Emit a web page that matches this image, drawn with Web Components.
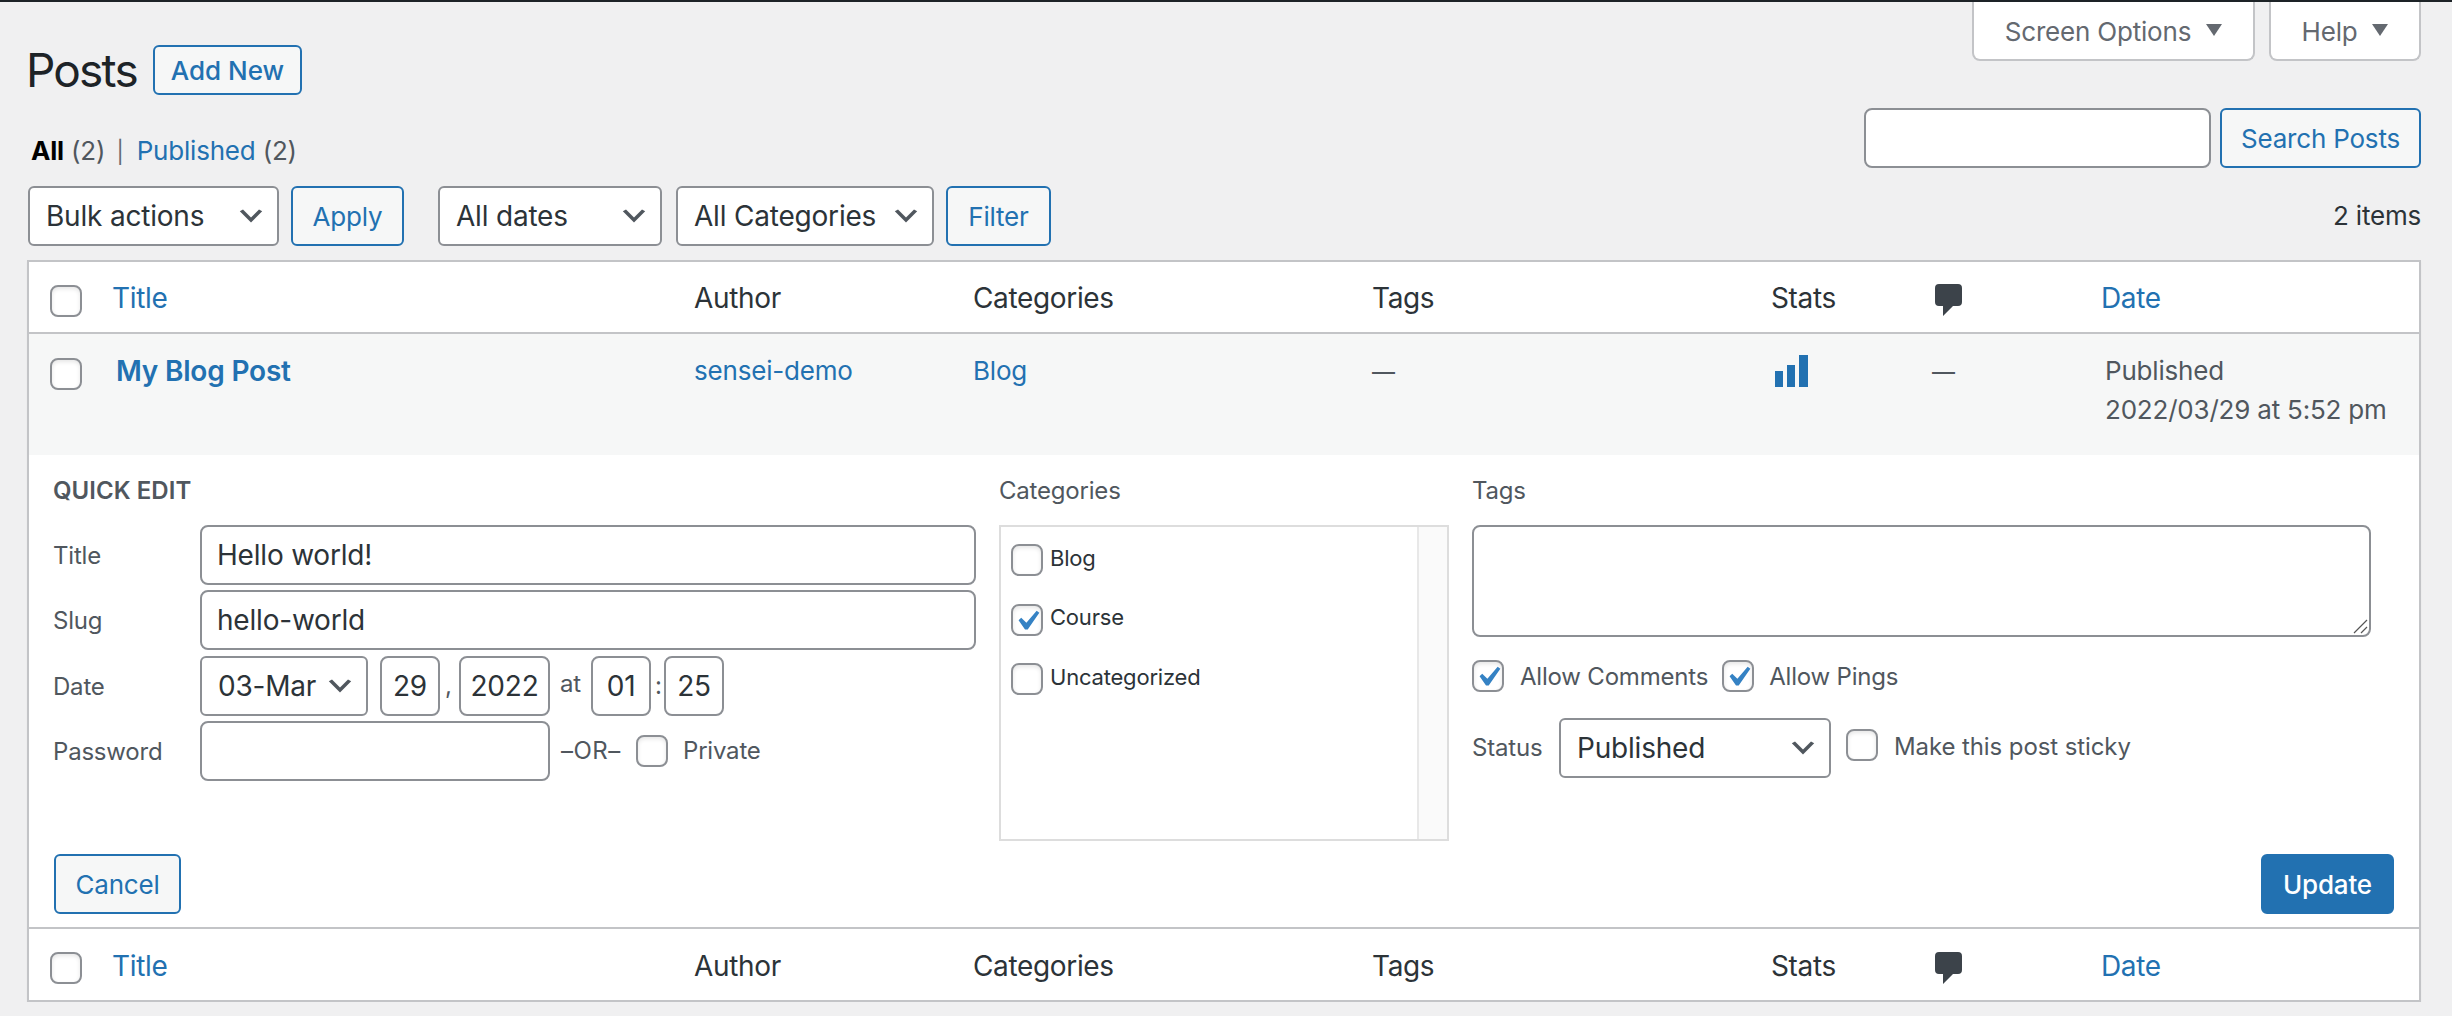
<!DOCTYPE html>
<html>
<head>
<meta charset="utf-8">
<title>Posts</title>
<style>
  html, body { margin: 0; background: #f0f0f1; }
  body { font: 26px/36px Inter, "Liberation Sans", sans-serif; color: #2c3338; letter-spacing: -0.2px; }
</style>
</head>
<body>
<wp-page>
  <wp-top-section>
    <wp-heading slot="left">
      Posts
      <wp-button slot="action" small style="width:149px">Add New</wp-button>
    </wp-heading>
    <wp-views slot="left">
      <b>All</b> <wp-muted>(2)</wp-muted> <wp-muted class="sep">|</wp-muted> <wp-link>Published</wp-link> <wp-muted>(2)</wp-muted>
    </wp-views>
    <wp-tabs slot="right">
      <wp-tab style="width:283px">Screen Options</wp-tab>
      <wp-tab style="width:152px">Help</wp-tab>
    </wp-tabs>
    <wp-search slot="right">
      <wp-field style="width:347px"></wp-field>
      <wp-button style="width:201px">Search Posts</wp-button>
    </wp-search>
  </wp-top-section>

  <wp-tablenav>
    <wp-select style="width:251px">Bulk actions</wp-select>
    <wp-button style="width:113px;margin-left:12px">Apply</wp-button>
    <wp-select style="width:224px;margin-left:34px">All dates</wp-select>
    <wp-select style="width:258px;margin-left:14px">All Categories</wp-select>
    <wp-button style="width:105px;margin-left:12px">Filter</wp-button>
    <wp-count>2 items</wp-count>
  </wp-tablenav>

  <wp-posts-table>
    <wp-head-row></wp-head-row>
    <wp-post-row>
      <wp-link slot="title" bold>My Blog Post</wp-link>
      <wp-link slot="author">sensei-demo</wp-link>
      <wp-link slot="categories">Blog</wp-link>
      <wp-dash slot="tags">—</wp-dash>
      <wp-stats slot="stats"></wp-stats>
      <wp-dash slot="comments">—</wp-dash>
      <span slot="date">Published<br>2022/03/29 at 5:52 pm</span>
    </wp-post-row>
    <wp-quick-edit>
      <wp-legend slot="left" strong>QUICK EDIT</wp-legend>
      <wp-form-row slot="left" label="Title"><wp-field big>Hello world!</wp-field></wp-form-row>
      <wp-form-row slot="left" label="Slug"><wp-field big>hello-world</wp-field></wp-form-row>
      <wp-form-row slot="left" label="Date">
        <wp-select style="width:168px">03-Mar</wp-select>
        <wp-field center style="width:60px;margin-left:12px">29</wp-field>
        <wp-note style="width:14px;padding-left:5px">,</wp-note>
        <wp-field center style="width:91px">2022</wp-field>
        <wp-note style="width:31px;padding-left:10px;margin-bottom:3px">at</wp-note>
        <wp-field center style="width:60px">01</wp-field>
        <wp-note style="width:9px;padding-left:4px">:</wp-note>
        <wp-field center style="width:60px">25</wp-field>
      </wp-form-row>
      <wp-form-row slot="left" label="Password">
        <wp-field style="width:350px"></wp-field>
        <wp-note style="margin-left:11px;width:62px;letter-spacing:.5px">–OR–</wp-note>
        <wp-check style="margin-left:13px"></wp-check>
        <wp-note style="margin-left:15px">Private</wp-note>
      </wp-form-row>

      <wp-legend slot="middle">Categories</wp-legend>
      <wp-cat-box slot="middle">
        <wp-cat>Blog</wp-cat>
        <wp-cat checked>Course</wp-cat>
        <wp-cat>Uncategorized</wp-cat>
      </wp-cat-box>

      <wp-legend slot="right">Tags</wp-legend>
      <wp-textarea slot="right"></wp-textarea>
      <wp-options slot="right">
        <wp-check checked></wp-check>
        <wp-note style="margin-left:16px;padding-top:3px">Allow Comments</wp-note>
        <wp-check checked style="margin-left:14px"></wp-check>
        <wp-note style="margin-left:15px;padding-top:3px">Allow Pings</wp-note>
      </wp-options>
      <wp-options slot="right" status>
        <wp-note style="width:87px">Status</wp-note>
        <wp-select style="width:272px">Published</wp-select>
        <wp-check style="margin-left:15px;margin-bottom:6px"></wp-check>
        <wp-note style="margin-left:16px;margin-bottom:2px;letter-spacing:-.1px">Make this post sticky</wp-note>
      </wp-options>

      <wp-button slot="cancel" style="width:127px">Cancel</wp-button>
      <wp-button slot="update" primary style="width:133px">Update</wp-button>
    </wp-quick-edit>
    <wp-head-row footer></wp-head-row>
  </wp-posts-table>
</wp-page>

<script>
const CHEVRON = `<svg viewBox="0 0 20 20" width="32" height="32"><path fill="#50575e" d="M5 6l5 5 5-5 2 1-7 7-7-7 2-1z"/></svg>`;
const TICK = `<svg viewBox="0 0 20 20" width="40" height="40"><path fill="#3582c4" d="M14.83 4.89l1.34.94-5.81 8.38H9.02L5.78 9.67l1.34-1.25 2.57 2.4z"/></svg>`;
const BUBBLE = `<svg viewBox="0 0 27 32" width="27" height="32"><path fill="#3c434a" d="M4 0h19a4 4 0 0 1 4 4v14a4 4 0 0 1-4 4h-5L8 32V22H4a4 4 0 0 1-4-4V4a4 4 0 0 1 4-4z"/></svg>`;

// small helper, every element is just a shadow root with its own style
function define(name, css, html = "<slot></slot>") {
  customElements.define(name, class extends HTMLElement {
    constructor() {
      super();
      this.attachShadow({ mode: "open" });
    }
    connectedCallback() {
      if (this.shadowRoot.innerHTML) return;
      const body = typeof html === "function" ? html(this) : html;
      this.shadowRoot.innerHTML = `<style>${css}</style>${body}`;
    }
  });
}

define("wp-page", `:host { display: block; border-top: 2px solid #1d2327; padding: 0 31px 0 27px; }`);

define("wp-top-section", `
  :host { display: flex; justify-content: space-between; height: 166px; }
  .left { padding-top: 43px; }
`, `<div class="left"><slot name="left"></slot></div><div><slot name="right"></slot></div>`);

define("wp-heading", `
  :host { display: flex; align-items: center; height: 50px; margin-left: -1px; font-size: 46px; color: #1d2327; letter-spacing: -1.8px; }
  ::slotted(wp-button) { margin-left: 16px; letter-spacing: 0; }
`, `<slot></slot><slot name="action"></slot>`);

define("wp-views", `:host { display: block; margin-top: 38px; padding-left: 4px; line-height: 36px; color: #000; }`);
define("wp-muted", `:host { color: #50575e; } :host(.sep) { margin: 0 6px 0 4px; color: #646970; font-size: 22px; }`);
define("wp-link", `:host { color: #2271b1; } :host([bold]) { font-weight: 600; font-size: 28px; }`);
define("wp-dash", `:host { color: #50575e; font-size: 23px; }`);

define("wp-tabs", `:host { display: flex; justify-content: flex-end; gap: 14px; }`);
define("wp-tab", `
  :host { display: flex; align-items: center; justify-content: center; gap: 15px; box-sizing: border-box; height: 59px; padding-top: 3px;
    background: #fff; border: 2px solid #c3c4c7; border-top: 0; border-radius: 0 0 8px 8px; color: #646970; }
  i { width: 0; height: 0; border: 8px solid transparent; border-top: 12px solid #646970; border-bottom: 0; margin-bottom: 4px; }
`, `<slot></slot><i></i>`);

define("wp-search", `:host { display: flex; justify-content: flex-end; gap: 9px; margin-top: 47px; }`);

define("wp-button", `
  :host { display: inline-flex; align-items: center; justify-content: center; box-sizing: border-box; height: 60px; padding-top: 2px;
    border: 2px solid #2271b1; border-radius: 6px; background: #f6f7f7; color: #2271b1; font-size: 26px; vertical-align: top; }
  :host([small]) { height: 50px; font-weight: 500; }
  :host([primary]) { background: #2271b1; color: #fff; font-weight: 500; }
`);

define("wp-select", `
  :host { display: flex; align-items: center; justify-content: space-between; flex: none; box-sizing: border-box; height: 60px;
    padding: 0 10px 0 16px; background: #fff; border: 2px solid #8c8f94; border-radius: 6px; color: #2c3338; font-size: 28px; }
  svg { flex: none; }
`, `<span><slot></slot></span>${CHEVRON}`);

define("wp-field", `
  :host { display: flex; align-items: center; flex: 1 0 auto; box-sizing: border-box; height: 60px; padding: 0 15px;
    background: #fff; border: 2px solid #8c8f94; border-radius: 8px; color: #2c3338; font-size: 28px; }
  :host([center]) { justify-content: center; padding: 0; flex: none; }
  :host([style]) { flex: none; }
`);

define("wp-tablenav", `
  :host { display: flex; align-items: center; margin-top: 18px; padding-left: 1px; }
  ::slotted(wp-count) { margin-left: auto; }
`);
define("wp-count", `:host { display: block; color: #2c3338; font-size: 26px; }`);

define("wp-posts-table", `
  :host { display: block; margin-top: 14px; background: #fff; border: 2px solid #c3c4c7; box-shadow: 0 2px 2px rgba(0,0,0,.04);
    --cols: 83px 582px 279px 399px 399px 164px 166px 1fr; }
`);

define("wp-check", `
  :host { display: flex; align-items: center; justify-content: center; flex: none; box-sizing: border-box; width: 32px; height: 32px;
    background: #fff; border: 2px solid #8c8f94; border-radius: 8px; box-shadow: inset 0 2px 4px rgba(0,0,0,.1); overflow: hidden; }
  svg { display: none; flex: none; margin-top: 2px; }
  :host([checked]) svg { display: block; }
`, TICK);

define("wp-head-row", `
  :host { display: grid; grid-template-columns: var(--cols); align-items: center; height: 70px; border-bottom: 2px solid #c3c4c7; font-size: 28px; color: #2c3338; letter-spacing: -.35px; }
  :host([footer]) { border-bottom: 0; border-top: 2px solid #c3c4c7; height: 71px; }
  wp-check { margin: 8px 0 0 21px; }
  :host([footer]) wp-check { margin-top: 6px; }
  .t { padding-top: 2px; }
  .link { color: #2271b1; }
  svg { display: block; margin-top: 6px; }
`, `<div><wp-check></wp-check></div><div class="t link">Title</div><div class="t">Author</div><div class="t">Categories</div><div class="t">Tags</div><div class="t">Stats</div><div>${BUBBLE}</div><div class="t link">Date</div>`);

define("wp-post-row", `
  :host { display: grid; grid-template-columns: var(--cols); height: 121px; background: #f6f7f7; color: #50575e; font-size: 26px; line-height: 39px; box-sizing: border-box; padding-top: 17px; }
  wp-check { margin: 7px 0 0 21px; }
  .title { padding: 1px 0 0 4px; }
  .dash-c { margin-left: -3px; }
  .stats { padding-left: 4px; }
  .date { padding-left: 4px; white-space: nowrap; }
`, `<div><wp-check></wp-check></div>
    <div class="title"><slot name="title"></slot></div>
    <div><slot name="author"></slot></div>
    <div><slot name="categories"></slot></div>
    <div><slot name="tags"></slot></div>
    <div class="stats"><slot name="stats"></slot></div>
    <div class="dash-c"><slot name="comments"></slot></div>
    <div class="date"><slot name="date"></slot></div>`);

define("wp-stats", `:host { display: block; margin-top: 4px; } svg { display: block; }`,
  `<svg width="33" height="32" viewBox="0 0 33 32"><path fill="#2271b1" d="M0 16h8v16H0zM12 10h8v22h-8zM24 0h9v32h-9z"/></svg>`);

define("wp-quick-edit", `
  :host { display: block; box-sizing: border-box; height: 472px; padding: 18px 24px 0 25px; background: #fff; color: #50575e; font-size: 24px; }
  .cols { display: grid; grid-template-columns: 922px 450px 899px; column-gap: 23px; height: 381px; }
  .left { display: flex; flex-direction: column; row-gap: 5.33px; }
  .foot { display: flex; justify-content: space-between; padding-right: 1px; }
`, `<div class="cols">
      <div class="left"><slot name="left"></slot></div>
      <div><slot name="middle"></slot></div>
      <div><slot name="right"></slot></div>
    </div>
    <div class="foot"><slot name="cancel"></slot><slot name="update"></slot></div>`);

define("wp-legend", `
  :host { display: block; height: 34px; line-height: 36px; margin-bottom: -1px; color: #50575e; font-size: 24px; }
  :host([strong]) { font-weight: 600; margin: 0 0 12.67px -1px; letter-spacing: .05px; }
`);
define("wp-form-row", `
  :host { display: flex; align-items: center; height: 60px; }
  .lab { flex: none; box-sizing: border-box; width: 147px; margin-left: -1px; padding-top: 2px; color: #50575e; font-size: 24px; }
`, (el) => `<div class="lab">${el.getAttribute("label")}</div><slot></slot>`);

define("wp-note", `:host { display: block; flex: none; text-align: left; color: #50575e; font-size: 24px; white-space: nowrap; }`);

define("wp-cat-box", `
  :host { display: flex; box-sizing: border-box; height: 316px; margin-top: 19px; background: #fff; border: 2px solid #ddd; }
  .list { flex: 1; padding: 17px 0 0 10px; display: flex; flex-direction: column; gap: 27.5px; }
  .bar { flex: none; width: 28px; background: #fafafa; border-left: 2px solid #e8e8e8; }
`, `<div class="list"><slot></slot></div><div class="bar"></div>`);
define("wp-cat", `
  :host { display: flex; align-items: center; gap: 7px; height: 32px; color: #2c3338; font-size: 22px; }
  span { margin-bottom: 5px; }
`, (el) => `<wp-check ${el.hasAttribute("checked") ? "checked" : ""}></wp-check><span><slot></slot></span>`);

define("wp-textarea", `
  :host { display: block; position: relative; box-sizing: border-box; height: 112px; margin-top: 19px; background: #fff; border: 2px solid #8c8f94; border-radius: 8px; }
  svg { position: absolute; right: 1px; bottom: 1px; }
`, `<svg width="16" height="16" viewBox="0 0 16 16"><path stroke="#555" stroke-width="1.2" fill="none" d="M15 2 2 15M15 9l-6 6"/></svg>`);

define("wp-options", `
  :host { display: flex; align-items: center; margin-top: 19px; }
  :host([status]) { margin-top: 23px; }
`);
</script>
</body>
</html>
